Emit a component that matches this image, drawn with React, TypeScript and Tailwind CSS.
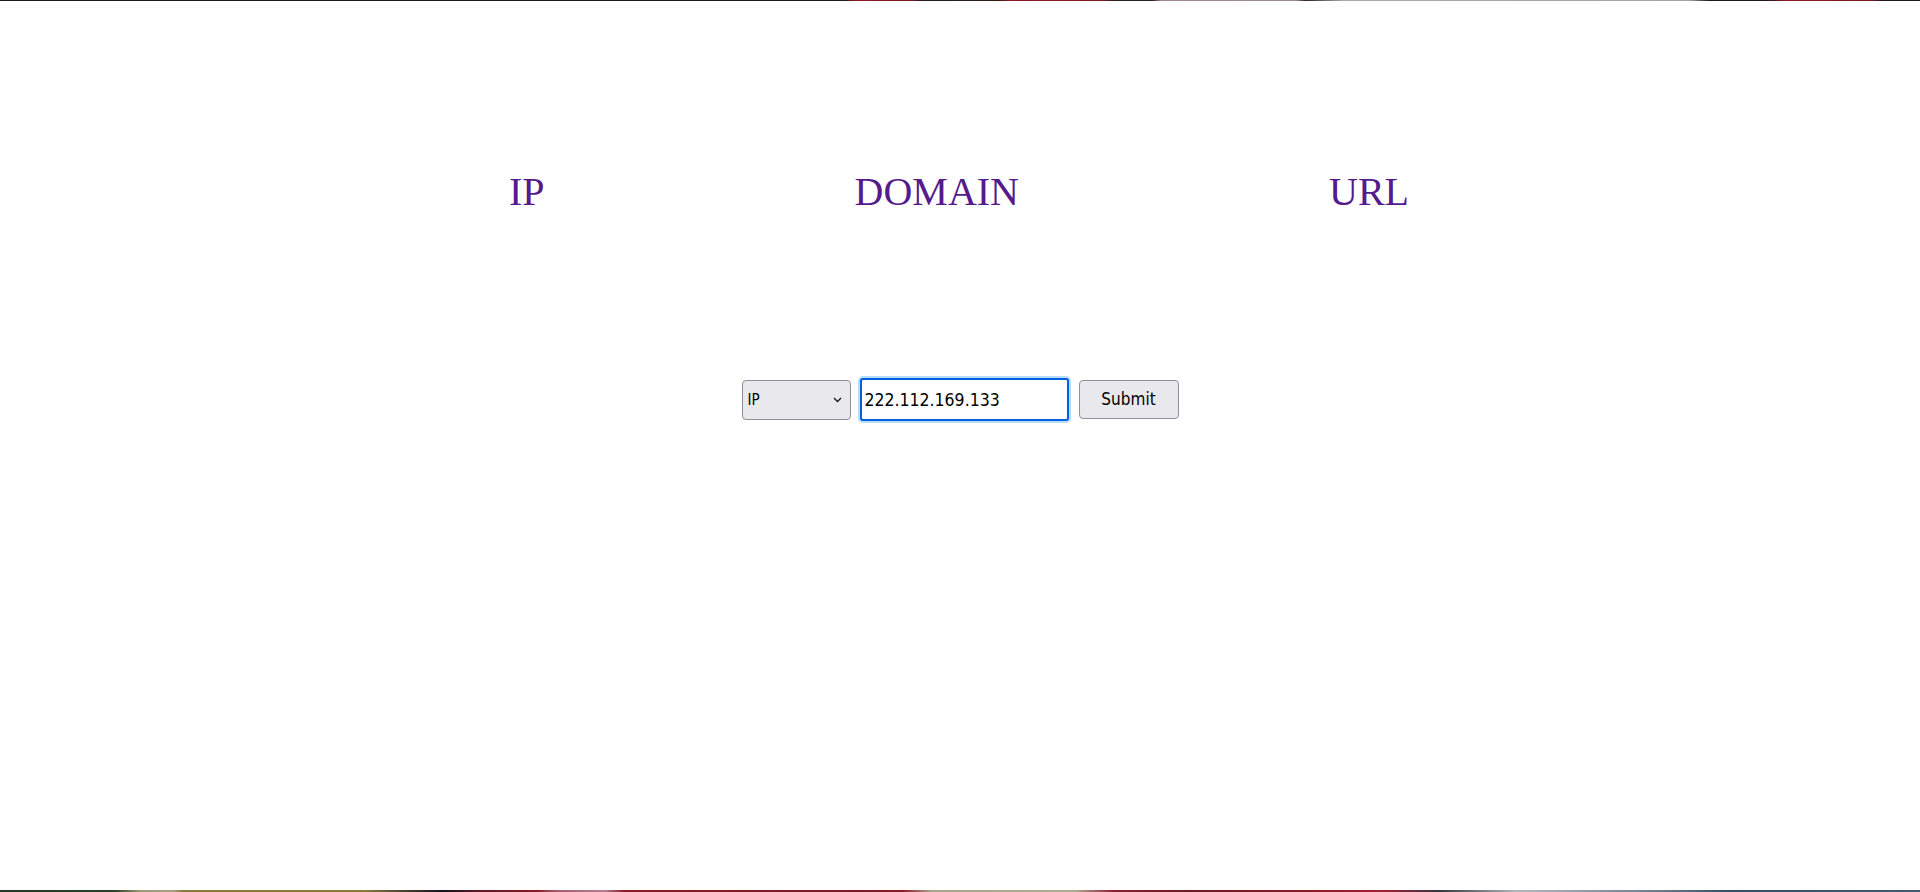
import React from "react";

export default function App() {
  return (
    <div className="relative h-[892px] w-full overflow-hidden bg-white">
      <div className="h-px w-full bg-[linear-gradient(to_right,#1e1a1a_0%,#1e1a1a_44%,#8a1a20_44.5%,#7a1820_47.5%,#241c1c_48%,#301c1c_52%,#8c1a22_52.5%,#7c1a22_57.5%,#2a2020_58%,#2a2020_60%,#a08890_60.5%,#9a8a90_67.5%,#302428_68%,#6a6a70_69%,#b0a8ac_70%,#a8a0a4_88%,#201818_89%,#201818_92%,#8a1a22_93%,#7a1a22_97.5%,#201818_98%)]" />
      <div className="flex flex-col items-center">
        <div className="mt-[169px] mr-[2px] flex items-start justify-center gap-[310px]">
          <a
            href="#ip"
            className="text-[40px] leading-[44px] text-[#551a8b] no-underline"
            style={{ fontFamily: '"Liberation Serif", "Times New Roman", serif' }}
          >
            IP
          </a>
          <a
            href="#domain"
            className="text-[40px] leading-[44px] text-[#551a8b] no-underline"
            style={{ fontFamily: '"Liberation Serif", "Times New Roman", serif' }}
          >
            DOMAIN
          </a>
          <a
            href="#url"
            className="text-[40px] leading-[44px] text-[#551a8b] no-underline"
            style={{ fontFamily: '"Liberation Serif", "Times New Roman", serif' }}
          >
            URL
          </a>
        </div>
        <form
          className="mt-[164px] flex h-[43px] items-center"
          onSubmit={(e) => e.preventDefault()}
        >
          <div className="relative h-[40px] w-[109px]">
            <select
              defaultValue="IP"
              className="h-full w-full appearance-none rounded-[4px] border border-[#8f8f9d] bg-[#e9e9ed] pl-[5px] py-[10px] text-[15px] leading-[18px] text-black outline-none"
              style={{ fontFamily: '"DejaVu Sans Condensed", "DejaVu Sans", sans-serif' }}
            >
              <option value="IP">IP</option>
              <option value="DOMAIN">DOMAIN</option>
              <option value="URL">URL</option>
            </select>
            <svg
              className="pointer-events-none absolute right-[9px] top-[17px]"
              width="9"
              height="6"
              viewBox="0 0 9 6"
            >
              <path d="M1 1 L4.5 4.5 L8 1" fill="none" stroke="#1a1a1a" strokeWidth="1.4" />
            </svg>
          </div>
          <input
            type="text"
            defaultValue="222.112.169.133"
            className="ml-[9px] h-[43px] w-[209px] rounded-[3px] border-2 border-[#0060df] bg-white pl-[3px] text-[17.5px] text-black shadow-[0_0_0_2px_#b8dcfb] outline-none"
            style={{ fontFamily: '"DejaVu Sans Condensed", "DejaVu Sans", sans-serif' }}
          />
          <button
            type="submit"
            className="ml-[10px] h-[39px] w-[100px] rounded-[4px] border border-[#8f8f9d] bg-[#e9e9ed] text-[17px] text-black"
            style={{ fontFamily: '"DejaVu Sans Condensed", "DejaVu Sans", sans-serif' }}
          >
            Submit
          </button>
        </form>
      </div>
      <div className="absolute bottom-0 left-0 h-[2px] w-full bg-[linear-gradient(to_right,#1e3a22_0%,#2a4028_6%,#a09a78_7.3%,#a8a080_9%,#8a7a42_9.5%,#8a7a42_19%,#4a4030_21%,#101418_23%,#5a1a24_25%,#8a1a28_28%,#a06070_29%,#b08090_31.5%,#8a1a28_32.5%,#7a1a24_45%,#8a1a28_47%,#a8a488_48.5%,#b0ac90_56%,#8a2030_58%,#6a1a24_62%,#8a1a28_68%,#a02030_72%,#303840_75%,#b0b8c0_79%,#708090_86%,#30506a_90%,#405a78_100%)]" />
    </div>
  );
}
